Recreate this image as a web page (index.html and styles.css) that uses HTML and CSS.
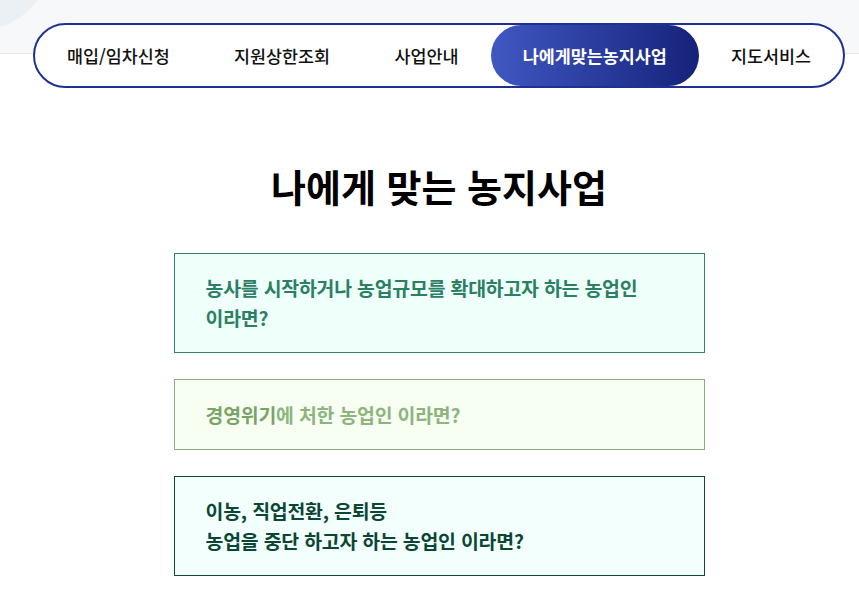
FILE: index.html
```html
<!DOCTYPE html>
<html lang="ko">
<head>
    <meta charset="UTF-8">
    <meta name="viewport" content="width=device-width, initial-scale=1.0">
    <title>나에게 맞는 농지사업</title>
    <link rel="stylesheet" href="styles.css">
</head>
<body>
    <header>
        <span class="deco"></span>
        <nav class="wrap">
            <ul>
                <li><a href="#">매입/임차신청</a></li>
                <li><a href="#">지원상한조회</a></li>
                <li><a href="#">사업안내</a></li>
                <li><a href="#" class="active">나에게맞는농지사업</a></li>
                <li><a href="#">지도서비스</a></li>
            </ul>
        </nav>
    </header>

    <section class="wrap biz">
        <h2>나에게 맞는 농지사업</h2>
        <a href="#" class="card start">농사를 시작하거나 농업규모를 확대하고자 하는 농업인 이라면?</a>
        <a href="#" class="card crisis"><em>경영위기</em>에 처한 농업인 이라면?</a>
        <a href="#" class="card retire">이농, 직업전환, 은퇴등<br>농업을 중단 하고자 하는 농업인 이라면?</a>
    </section>
</body>
</html>
```

FILE: styles.css
```css
body {
    margin: 0;
    font-family: "Noto Sans CJK KR", "Noto Sans", sans-serif;
    color: #111;
    background: #fff;
    overflow: hidden;
}
header {
    position: relative;
    padding-top: 23px;
    background: linear-gradient(#f6f8fa 0, #f6f8fa 53px, #e3e7eb 53px, #e3e7eb 54px, #fff 54px);
}
.deco {
    position: absolute;
    left: -90px;
    top: -110px;
    width: 140px;
    height: 140px;
    border-radius: 50%;
    background: #eaf0f3;
}
.wrap {
    width: 812px;
    margin-left: 33px;
    box-sizing: border-box;
}
nav {
    position: relative;
    height: 65px;
    border: 2px solid #1e3190;
    border-radius: 33px;
    background: #fff;
}
nav ul {
    list-style: none;
    margin: 0;
    padding: 0;
    height: 100%;
    display: flex;
    justify-content: space-between;
}
nav a {
    display: flex;
    align-items: center;
    height: 100%;
    padding: 0 32px;
    border-radius: 31px;
    font-size: 17.4px;
    font-weight: 500;
    color: #111;
    text-decoration: none;
    white-space: nowrap;
}
nav a.active {
    color: #fff;
    font-weight: 700;
    background: linear-gradient(90deg, #4058c2, #15227a);
}
.biz {
    padding-top: 73px;
    text-align: center;
}
.biz h2 {
    margin: 0 0 42px;
    font-size: 38px;
    line-height: 50px;
    font-weight: 700;
    color: #000;
}
.card {
    display: block;
    width: 531px;
    margin: 0 auto 26px;
    padding: 19px 31px;
    box-sizing: border-box;
    border: 1px solid;
    text-align: left;
    font-size: 19.4px;
    line-height: 30px;
    font-weight: 700;
    letter-spacing: -0.2px;
    word-break: keep-all;
    text-decoration: none;
}
.card em {
    font-style: normal;
}
.start {
    border-color: #2f8566;
    background: #effffa;
    color: #2a8063;
}
.crisis {
    padding-top: 20px;
    border-color: #8aab7b;
    background: #f7fff3;
    color: #8db47f;
}
.crisis em {
    color: #79a466;
}
.retire {
    border-color: #0c4b36;
    background: #f3fffd;
    color: #0b4634;
}
```
